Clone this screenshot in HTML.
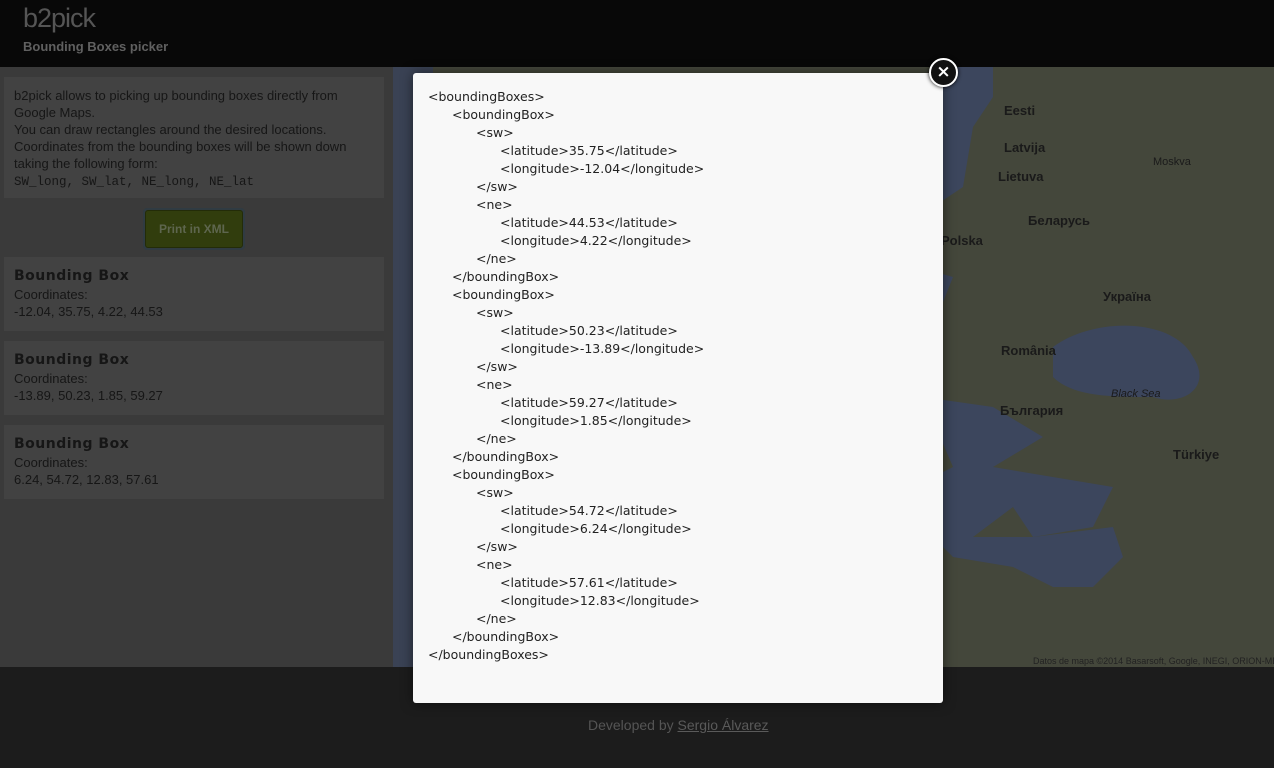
<!DOCTYPE html>
<html><head><meta charset="utf-8"><style>
*{margin:0;padding:0;box-sizing:border-box}
body{width:1274px;height:768px;overflow:hidden;background:#1c1c1c;font-family:"Liberation Sans",sans-serif;position:relative}
#hdr{position:absolute;left:0;top:0;width:1274px;height:67px;background:#080808}
#hdr .t{position:absolute;left:23px;top:3px;font-size:27px;color:#555;letter-spacing:-1px}
#hdr .s{position:absolute;left:23px;top:39px;font-size:13px;font-weight:bold;color:#606060}
#left{position:absolute;left:0;top:67px;width:393px;height:600px;background:#3a3a3a}
.box{position:absolute;left:4px;width:380px;background:#424242;color:#161616;font-size:13px;line-height:17px;padding:0 10px}
.mono{font-family:"Liberation Mono",monospace;font-size:12.5px}
.bb{font-weight:bold;letter-spacing:.5px;line-height:20px;font-family:"DejaVu Sans",sans-serif;font-size:14px}
#btn{position:absolute;left:143px;top:208px;width:102px;height:42px;background:#303b42;border-radius:4px}
#btn div{position:absolute;left:2px;top:2px;width:98px;height:38px;background:#313d0d;border:1px solid #232c08;border-radius:3px;color:#5e664e;font-size:12px;font-weight:bold;text-align:center;line-height:36px}
#map{position:absolute;left:393px;top:67px;width:881px;height:600px;background:#44473b}
#modal{position:absolute;left:413px;top:73px;width:530px;height:630px;background:#f8f8f8;border-radius:3px;box-shadow:0 0 12px rgba(0,0,0,.5)}
#modal .c{position:absolute;left:15px;top:15px;font-family:"DejaVu Sans",sans-serif;font-size:12.5px;line-height:18px;color:#222;white-space:pre}
.l1{padding-left:24px}.l2{padding-left:48px}.l3{padding-left:72px}
#close{position:absolute;left:929px;top:58px;width:29px;height:29px;border-radius:50%;background:#111;border:2px solid #fff;box-shadow:0 0 4px #000;color:#fff;font-size:17px;font-weight:bold;text-align:center;line-height:24px;font-family:"DejaVu Sans",sans-serif}
#foot{position:absolute;left:588px;top:717px;font-size:14px;color:#555;white-space:nowrap}
#foot u{color:#5a5a5a}
</style></head><body>
<div id="hdr"><div class="t">b2pick</div><div class="s">Bounding Boxes picker</div></div>
<div id="left">
<div class="box" style="top:10px;height:121px;padding-top:10px">b2pick allows to picking up bounding boxes directly from Google Maps.<br>You can draw rectangles around the desired locations.<br>Coordinates from the bounding boxes will be shown down taking the following form:<br><span class="mono">SW_long, SW_lat, NE_long, NE_lat</span></div>
<div class="box" style="top:190px;height:74px;padding-top:9px"><div class="bb">Bounding Box</div>Coordinates:<br>-12.04, 35.75, 4.22, 44.53</div>
<div class="box" style="top:274px;height:74px;padding-top:9px"><div class="bb">Bounding Box</div>Coordinates:<br>-13.89, 50.23, 1.85, 59.27</div>
<div class="box" style="top:358px;height:74px;padding-top:9px"><div class="bb">Bounding Box</div>Coordinates:<br>6.24, 54.72, 12.83, 57.61</div>
</div>
<div id="btn"><div>Print in XML</div></div>
<div id="map"><svg width="881" height="600" viewBox="0 0 881 600">
<rect x="0" y="0" width="40" height="600" fill="#3a4254"/>
<path d="M547 0 L600 0 L600 30 L580 60 L570 120 L540 140 L520 150 L525 200 L560 210 L548 240 L550 170 L520 160 L520 60 Z" fill="#3c465d"/>
<path d="M660 280 C700 250 780 250 800 290 C820 320 790 340 760 330 C720 330 680 330 660 310 Z" fill="#3c465d"/>
<path d="M530 330 L600 340 L650 370 L600 400 L720 420 L700 460 L640 470 L620 440 L580 470 L540 470 L520 420 L560 400 Z" fill="#3c465d"/>
<path d="M540 470 L640 470 L720 460 L730 490 L700 520 L660 520 L620 500 L560 490 Z" fill="#3c465d"/>
<text x="640" y="597" font-size="9" fill="#222" font-family="Liberation Sans">Datos de mapa ©2014 Basarsoft, Google, INEGI, ORION-ME</text>
<g font-family="Liberation Sans" font-size="11" fill="#1a1a1a" font-weight="bold">
<text x="611" y="48" font-size="13">Eesti</text><text x="611" y="85" font-size="13">Latvija</text><text x="605" y="114" font-size="13">Lietuva</text><text x="635" y="158" font-size="13">Беларусь</text><text x="548" y="178" font-size="13">Polska</text><text x="710" y="234" font-size="13">Україна</text><text x="608" y="288" font-size="13">România</text><text x="607" y="348" font-size="13">България</text><text x="780" y="392" font-size="13">Türkiye</text><text x="760" y="98" font-weight="normal">Moskva</text><text x="718" y="330" font-weight="normal" font-style="italic">Black Sea</text>
</g></svg></div>
<div id="modal"><div class="c"><div>&lt;boundingBoxes&gt;</div><div class="l1">&lt;boundingBox&gt;</div><div class="l2">&lt;sw&gt;</div><div class="l3">&lt;latitude&gt;35.75&lt;/latitude&gt;</div><div class="l3">&lt;longitude&gt;-12.04&lt;/longitude&gt;</div><div class="l2">&lt;/sw&gt;</div><div class="l2">&lt;ne&gt;</div><div class="l3">&lt;latitude&gt;44.53&lt;/latitude&gt;</div><div class="l3">&lt;longitude&gt;4.22&lt;/longitude&gt;</div><div class="l2">&lt;/ne&gt;</div><div class="l1">&lt;/boundingBox&gt;</div><div class="l1">&lt;boundingBox&gt;</div><div class="l2">&lt;sw&gt;</div><div class="l3">&lt;latitude&gt;50.23&lt;/latitude&gt;</div><div class="l3">&lt;longitude&gt;-13.89&lt;/longitude&gt;</div><div class="l2">&lt;/sw&gt;</div><div class="l2">&lt;ne&gt;</div><div class="l3">&lt;latitude&gt;59.27&lt;/latitude&gt;</div><div class="l3">&lt;longitude&gt;1.85&lt;/longitude&gt;</div><div class="l2">&lt;/ne&gt;</div><div class="l1">&lt;/boundingBox&gt;</div><div class="l1">&lt;boundingBox&gt;</div><div class="l2">&lt;sw&gt;</div><div class="l3">&lt;latitude&gt;54.72&lt;/latitude&gt;</div><div class="l3">&lt;longitude&gt;6.24&lt;/longitude&gt;</div><div class="l2">&lt;/sw&gt;</div><div class="l2">&lt;ne&gt;</div><div class="l3">&lt;latitude&gt;57.61&lt;/latitude&gt;</div><div class="l3">&lt;longitude&gt;12.83&lt;/longitude&gt;</div><div class="l2">&lt;/ne&gt;</div><div class="l1">&lt;/boundingBox&gt;</div><div>&lt;/boundingBoxes&gt;</div></div></div>
<div id="close">×</div>
<div id="foot">Developed by <u>Sergio Álvarez</u></div>
</body></html>
